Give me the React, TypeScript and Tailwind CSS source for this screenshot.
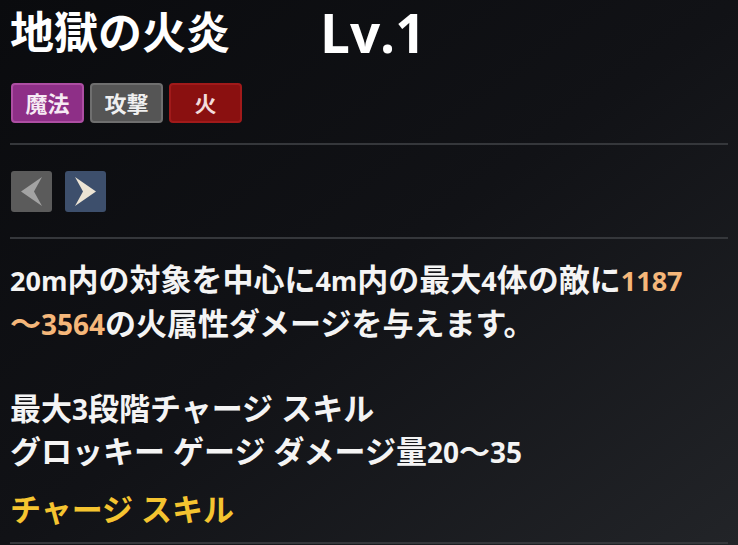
import React from "react";

const FONT = { fontFamily: '"Open Sans", "Noto Sans CJK JP", sans-serif' };

// digits and latin letters run a touch smaller than the kana/kanji here
const Mix = ({ text, lat }: { text: string; lat: string }) => {
  const parts = text.split(/([A-Za-z0-9.]+)/);
  return (
    <>
      {parts.map((p, i) =>
        /^[A-Za-z0-9.]+$/.test(p) ? (
          <span key={i} className={lat}>
            {p}
          </span>
        ) : (
          <React.Fragment key={i}>{p}</React.Fragment>
        )
      )}
    </>
  );
};

const Divider = () => <div className="h-[2px] w-full bg-[#35373b]" />;

const Tag = ({ label, cls }: { label: string; cls: string }) => (
  <div
    className={`flex h-[40px] w-[73px] items-center justify-center rounded-[4px] border-2 text-[22px] font-bold ${cls}`}
  >
    {label}
  </div>
);

const Arrow = ({ dir }: { dir: "left" | "right" }) => {
  const right = dir === "right";
  return (
    <div
      className={`flex h-[41px] w-[41px] items-center justify-center rounded-[3px] ${
        right ? "bg-[#3d4f6c]" : "bg-[#5b5b5b]"
      }`}
    >
      <svg width="41" height="41" viewBox="0 0 41 41">
        {right ? (
          <path d="M10 6 L31 20.5 L10 35 L18 20.5 Z" fill="#ece4d4" />
        ) : (
          <path d="M31 6 L10 20.5 L31 35 L23 20.5 Z" fill="#a3a3a3" />
        )}
      </svg>
    </div>
  );
};

export default function App() {
  return (
    <div
      style={FONT}
      className="flex h-[545px] w-[738px] flex-col overflow-hidden bg-gradient-to-br from-[#0a0b0e] via-[#111216] to-[#222428] px-[10px] text-white"
    >
      {/* TITLE */}
      <div className="flex h-[66px] items-center gap-[90px] whitespace-nowrap font-bold text-white">
        <span className="text-[44px] leading-[1.3]">地獄の火炎</span>
        <span className="text-[53px] leading-[1.2]">Lv.1</span>
      </div>

      {/* TAGS */}
      <div className="mt-[17px] flex gap-[6px] pl-[1px]">
        <Tag label="魔法" cls="border-[#ad4ea3] bg-[#8e2f87] text-[#f6eaf4]" />
        <Tag label="攻撃" cls="border-[#6f6f6f] bg-[#555555] text-[#f0f0f0]" />
        <Tag label="火" cls="border-[#a11a1a] bg-[#8a1010] text-[#f3dcdc]" />
      </div>

      <div className="mt-[20px]">
        <Divider />
      </div>

      {/* NAV */}
      <div className="mt-[26px] flex gap-[13px] pl-[1px]">
        <Arrow dir="left" />
        <Arrow dir="right" />
      </div>

      <div className="mt-[25px]">
        <Divider />
      </div>

      {/* DESCRIPTION */}
      <div className="mt-[19px] whitespace-nowrap text-[31px] font-bold leading-[42px] text-[#f4f4f4]">
        <div>
          <Mix text="20m内の対象を中心に4m内の最大4体の敵に" lat="text-[27px]" />
          <span className="text-[27px] text-[#f5b77a]">1187</span>
        </div>
        <div>
          <span className="text-[#f5b77a]">
            〜<span className="text-[28px]">3564</span>
          </span>
          の火属性ダメージを与えます。
        </div>
        <div>&nbsp;</div>
        <div>
          <Mix text="最大3段階チャージ スキル" lat="text-[28px]" />
        </div>
        <div>
          <Mix text="グロッキー ゲージ ダメージ量20〜35" lat="text-[28px]" />
        </div>
      </div>

      <div className="mt-[15px] whitespace-nowrap text-[31px] font-bold leading-[42px] text-[#f5c430]">
        チャージ スキル
      </div>

      <div className="mt-[12px]">
        <Divider />
      </div>
    </div>
  );
}
